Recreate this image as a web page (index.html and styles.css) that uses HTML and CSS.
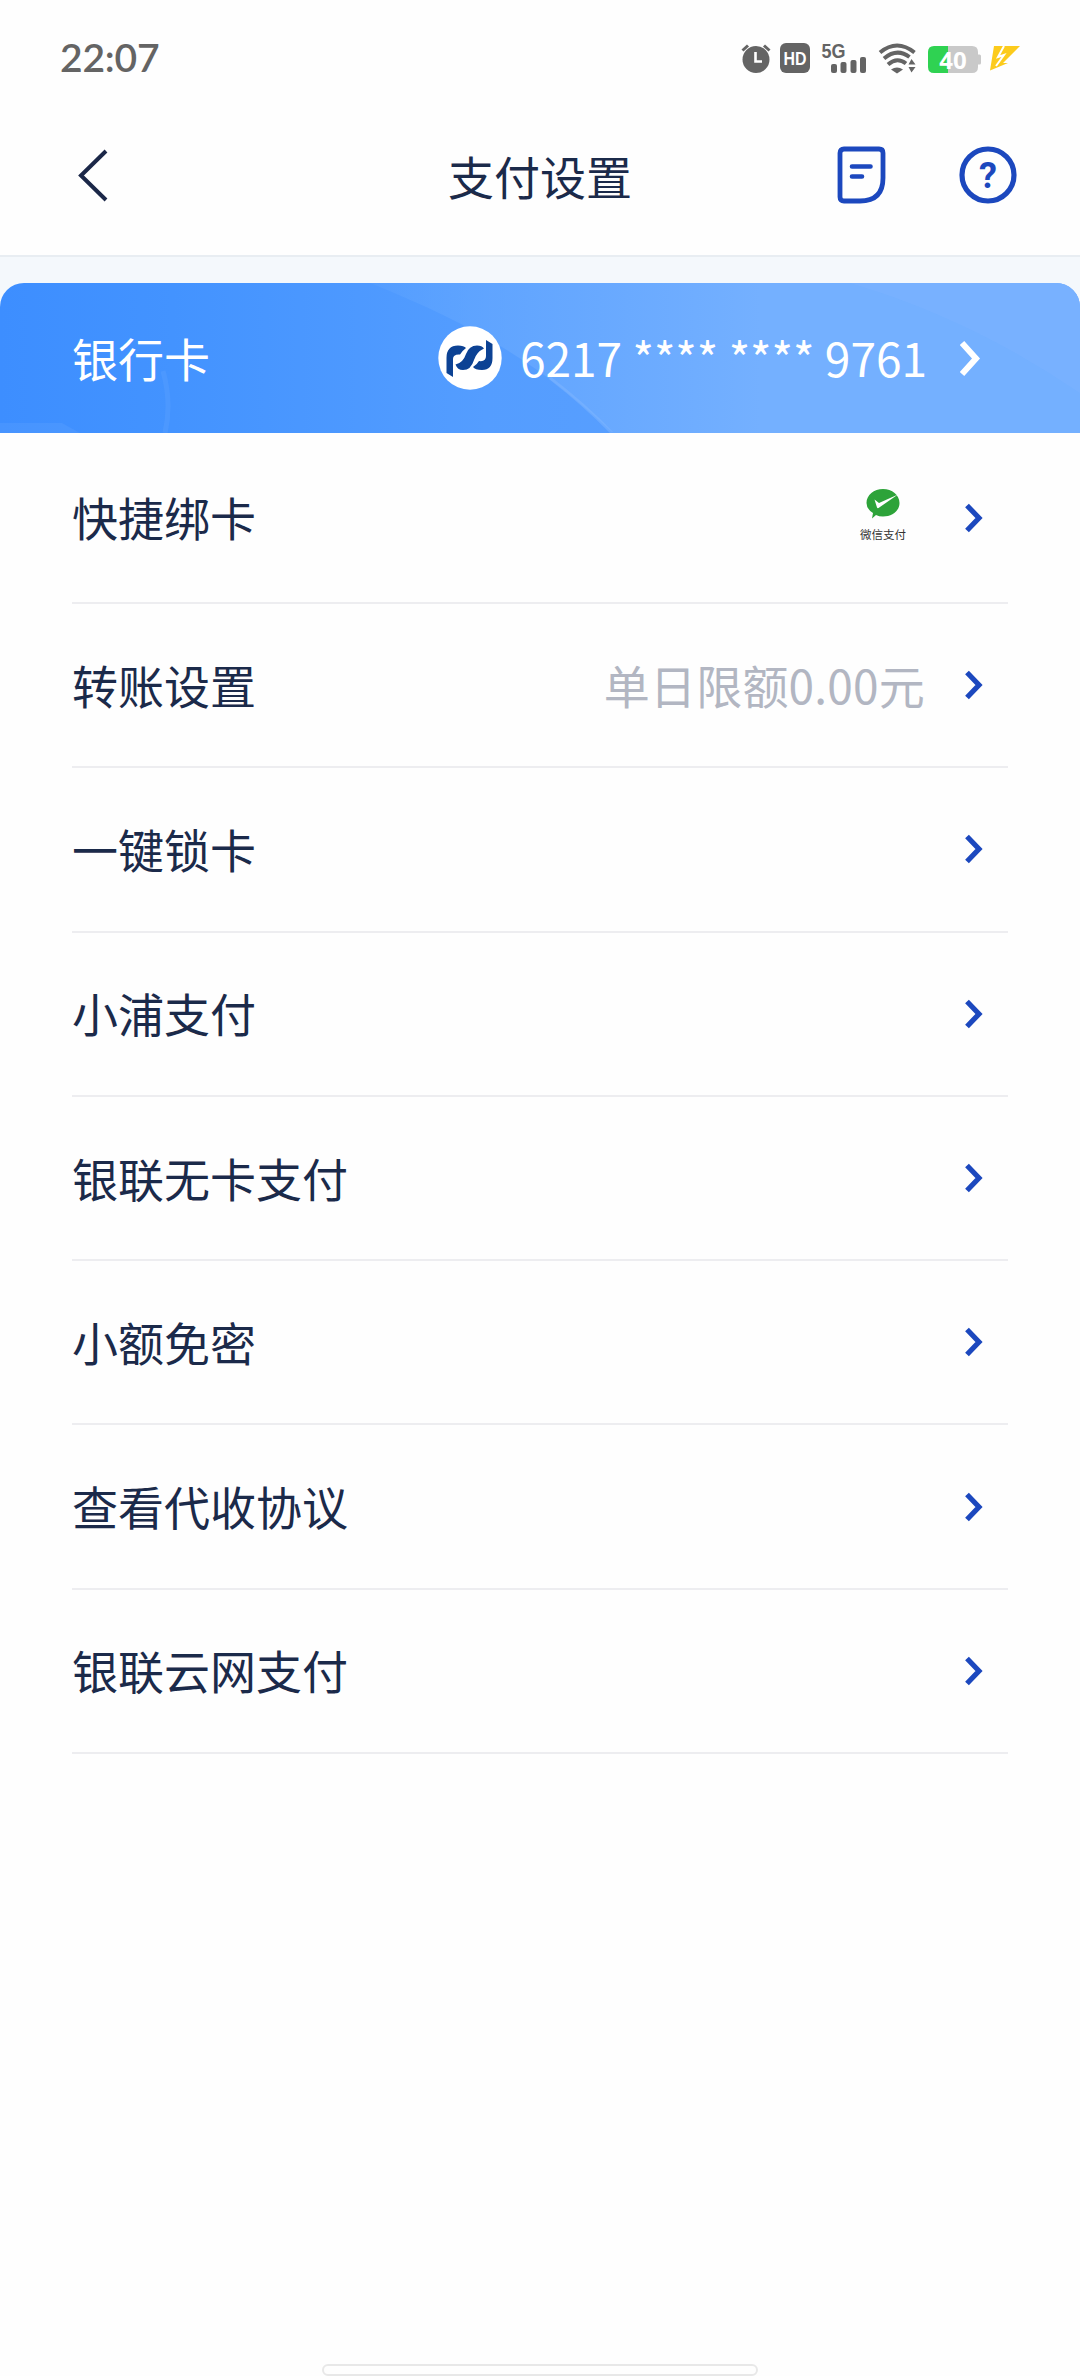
FILE: index.html
```html
<!DOCTYPE html>
<html lang="zh-CN">
<head>
<meta charset="utf-8">
<title>支付设置</title>
<link rel="stylesheet" href="styles.css">
</head>
<body>
<svg class="defs" width="0" height="0">
  <symbol id="chevron" viewBox="0 0 20 34"><path d="M3 4.500L15 17L3 29.500" fill="none" stroke="currentColor" stroke-width="5.200"/></symbol>
</svg>
<div class="screen">
  <div class="status">
    <span class="clock">22:07</span>
    <svg class="status-icons" width="300" height="60" viewBox="0 0 300 60">
      <g fill="#646464">
        <circle cx="16" cy="29.500" r="13.500"/>
        <path d="M2.500 20.500L8 15.500M29.500 20.500L24 15.500" stroke="#646464" stroke-width="3"/>
        <path d="M15.500 22V31.500H22" fill="none" stroke="#fff" stroke-width="2.600"/>
        <rect x="40" y="13" width="30" height="30" rx="6"/>
        <rect x="91" y="34" width="6" height="9" rx="2"/>
        <rect x="100.500" y="32" width="6" height="11" rx="2"/>
        <rect x="110.500" y="30" width="6" height="13" rx="2"/>
        <rect x="120" y="27" width="6" height="16" rx="2"/>
        <path d="M151 39.500Q157 35.500 163 39.500L157 43.500Z"/>
        <path d="M171.500 29L175.500 34.500H168.500ZM171.500 42.500L175.500 37H168.500Z"/>
      </g>
      <g fill="none" stroke="#646464" stroke-width="4">
        <path d="M140 22.500Q157 8.500 174.500 22.500"/>
        <path d="M144 28.500Q157 17.500 169.500 27"/>
        <path d="M148 34.500Q157 26.500 166 33.500"/>
      </g>
      <text class="hd" x="55" y="35" text-anchor="middle" textLength="23" lengthAdjust="spacingAndGlyphs">HD</text>
      <text class="net" x="81.500" y="27.500" textLength="24" lengthAdjust="spacingAndGlyphs">5G</text>
      <path d="M194 16H208V43H194Q188 43 188 37V22Q188 16 194 16Z" fill="#2fd252"/>
      <path d="M208 16H232Q238 16 238 22V24.500H239.500Q241 24.500 241 26V33Q241 34.500 239.500 34.500H238V37Q238 43 232 43H208Z" fill="#c9c9c9"/>
      <text class="pct" x="213" y="38.500" text-anchor="middle">40</text>
      <path d="M254 16H280L263 33L268 33L250 40.500Z" fill="#fccb1c"/>
      <path d="M264 16L258 27L264 25L256 36" fill="none" stroke="#fff" stroke-width="2"/>
    </svg>
  </div>
  <header class="nav">
    <svg class="back" width="40" height="60" viewBox="0 0 40 60"><path d="M34 6L9 30.500L34 55" fill="none" stroke="#1b2748" stroke-width="4"/></svg>
    <h1 class="title">支付设置</h1>
    <div class="actions">
      <svg width="52" height="60" viewBox="0 0 52 60" fill="none" stroke="#1c48be" stroke-linecap="round">
        <path d="M8 4H43Q47 4 47 8V33Q47 56 24 56H8Q4 56 4 52V8Q4 4 8 4Z" stroke-width="4.800"/>
        <path d="M16 21.500H34.500M16 31.500H26" stroke-width="4.600"/>
      </svg>
      <svg width="60" height="60" viewBox="0 0 60 60"><circle cx="30" cy="30" r="26" fill="none" stroke="#1c48be" stroke-width="5.200"/><text class="help" x="30" y="43" text-anchor="middle">?</text></svg>
    </div>
  </header>
  <main>
    <div class="card-wrap">
      <section class="card">
        <svg class="card-bg" width="1080" height="150" viewBox="0 0 1080 150">
          <defs>
            <linearGradient id="base" x1="0" y1="0" x2="1" y2="0"><stop offset="0" stop-color="#3d8eff"/><stop offset=".16" stop-color="#4393ff"/><stop offset=".45" stop-color="#549dff"/><stop offset="1" stop-color="#62a3ff"/></linearGradient>
            <linearGradient id="sheen" x1="370" y1="0" x2="760" y2="0" gradientUnits="userSpaceOnUse"><stop offset="0" stop-color="#66a9ff" stop-opacity=".2"/><stop offset=".45" stop-color="#68a9ff" stop-opacity=".8"/><stop offset="1" stop-color="#74b0ff"/></linearGradient>
          </defs>
          <path d="M0 0H1080V150H0Z" fill="url(#base)"/>
          <path d="M370 0C470 40 540 80 613 150H1080V0Z" fill="url(#sheen)"/>
          <path d="M850 0Q970 35 1080 110V0Z" fill="#80b5ff" fill-opacity=".35"/>
          <path d="M550 95Q585 122 612 150" fill="none" stroke="#82b9ff" stroke-width="3" stroke-opacity=".45"/>
          <path d="M163 88Q172 120 165 150" fill="none" stroke="#62a5ff" stroke-width="5" stroke-opacity=".3"/>
          <path d="M0 140H62L80 150H0Z" fill="#69a7ff" fill-opacity=".25"/>
        </svg>
        <span class="card-label">银行卡</span>
        <svg class="logo" width="64" height="64" viewBox="0 0 64 64">
          <circle cx="32" cy="32" r="31.700" fill="#fff"/>
          <g fill="#0c4294">
            <path d="M8.500 32Q8.500 19.500 20 19.500Q26 19.500 28 22Q24 25 22 28.500Q15 28 15 33V51L8.500 47Z"/>
            <path d="M54.500 32Q54.500 44 44 44Q37 44 35 41Q39 38.500 41 35Q48 36 48 30V14L54.500 18Z"/>
            <path d="M17.500 38.500Q25 37 28 28Q31 19.500 39 19.500Q44 19.500 46 22.500Q38.500 26 36 34Q33 44 25 44Q19.500 44 17.500 38.500Z"/>
          </g>
        </svg>
        <span class="number">6217 **** **** 9761</span>
        <svg class="chev" width="24" height="40" viewBox="0 0 24 40"><path d="M4 5L18 20.500L4 36" fill="none" stroke="#fff" stroke-width="6"/></svg>
      </section>
    </div>
    <ul class="list">
      <li class="row first"><span>快捷绑卡</span>
        <div class="wechat">
          <svg width="36" height="32" viewBox="0 0 36 32"><path d="M18 1C27 1 34.500 7 34.500 15S27 28.500 18 28.500Q14 28.500 11 27L7 30.500L8 25Q1.500 21 1.500 15C1.500 7 9 1 18 1Z" fill="#2da339"/><path d="M9.500 11.500L14 15L33 6.500L13.500 20Q12.500 20.500 12 19.500Z" fill="#fff"/></svg>
          <small>微信支付</small>
        </div>
        <svg class="arrow"><use href="#chevron"/></svg></li>
      <li class="row"><span>转账设置</span><span class="value">单日限额0.00元</span><svg class="arrow"><use href="#chevron"/></svg></li>
      <li class="row"><span>一键锁卡</span><svg class="arrow"><use href="#chevron"/></svg></li>
      <li class="row"><span>小浦支付</span><svg class="arrow"><use href="#chevron"/></svg></li>
      <li class="row"><span>银联无卡支付</span><svg class="arrow"><use href="#chevron"/></svg></li>
      <li class="row"><span>小额免密</span><svg class="arrow"><use href="#chevron"/></svg></li>
      <li class="row"><span>查看代收协议</span><svg class="arrow"><use href="#chevron"/></svg></li>
      <li class="row"><span>银联云网支付</span><svg class="arrow"><use href="#chevron"/></svg></li>
    </ul>
  </main>
  <div class="home-bar"></div>
</div>
</body>
</html>
```

FILE: styles.css
```css
* { box-sizing: border-box; }
body {
  margin: 0;
  background: #fefefe;
  color: #1b2a4a;
  font-family: "Noto Sans CJK SC", sans-serif;
  font-size: 46px;
  line-height: 68px;
}
svg { display: block; flex: none; }
.defs { position: absolute; }
.screen { width: 1080px; height: 2376px; display: flex; flex-direction: column; }

.status { height: 116px; padding: 30px 60px 0; display: flex; justify-content: space-between; }
.clock { font: 600 39px/54px Lato, sans-serif; letter-spacing: -0.2px; color: #646464; }
.status-icons { margin-right: -20px; }
.hd { font: 700 18px "Liberation Sans", sans-serif; fill: #fff; }
.net { font: 700 20px "Liberation Sans", sans-serif; fill: #646464; }
.pct { font: 700 24px "Open Sans", sans-serif; fill: #fff; }

.nav {
  height: 141px;
  padding: 0 62px 22px;
  display: grid;
  grid-template-columns: 1fr auto 1fr;
  align-items: center;
  border-bottom: 2px solid #e8edf2;
}
.back { margin-left: 10px; }
.title { margin: 0; font-size: 46px; font-weight: 400; line-height: 68px; color: #1b2a4a; }
.actions { display: flex; justify-content: flex-end; gap: 70px; }
.help { font: 700 36px Roboto, sans-serif; fill: #1c48be; }

.card-wrap { padding-top: 26px; background: #f4f8fc; }
.card {
  position: relative;
  z-index: 0;
  height: 150px;
  padding: 0 98px 0 72px;
  display: flex;
  align-items: center;
  overflow: hidden;
  border-radius: 24px 24px 0 0;
  color: #fff;
}
.card-bg { position: absolute; inset: 0; z-index: -1; }
.card-label { flex: 1; padding-bottom: 3px; }
.logo { margin-right: 18px; }
.number { margin-right: 31px; padding-bottom: 3px; white-space: nowrap; }

.list { margin: 0; padding: 0 72px; list-style: none; }
.row {
  height: 164.300px;
  padding-right: 24px;
  display: flex;
  align-items: center;
  border-bottom: 2px solid #ededf0;
}
.row > span { padding-bottom: 3px; }
.row.first { height: 171px; }
.arrow { width: 20px; height: 34px; margin-left: auto; color: #1c48be; }
.value { margin-left: auto; letter-spacing: 0.2px; color: #b2b6c2; }
.value + .arrow { margin-left: 39px; }
.wechat { margin-left: auto; padding-bottom: 4px; display: flex; flex-direction: column; align-items: center; gap: 5px; }
.wechat small { font-size: 11.500px; line-height: 18px; color: #333; }
.wechat + .arrow { margin-left: 58px; }

.home-bar {
  width: 436px;
  height: 12px;
  margin: auto auto 0;
  border: 2px solid #e8e8e8;
  border-radius: 6px;
}
```
